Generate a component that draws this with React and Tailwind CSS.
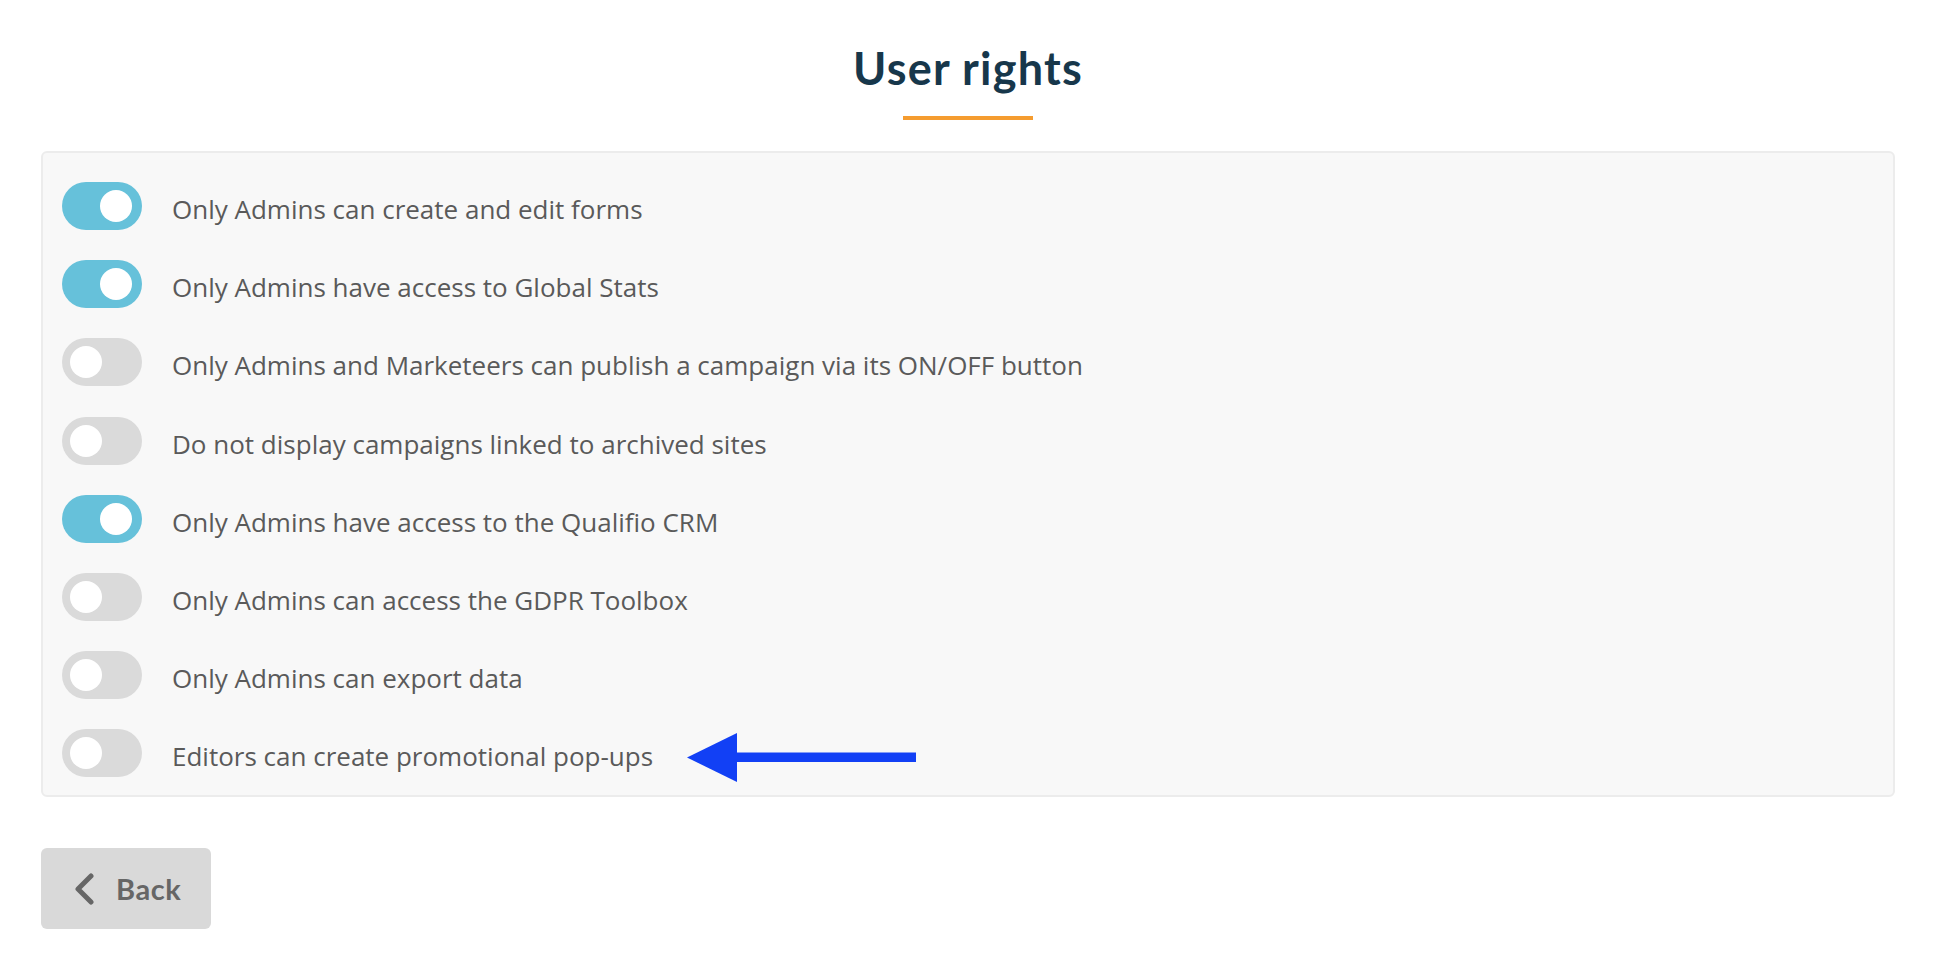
import { useState } from 'react'

const rights = [
  { key: 'forms', label: 'Only Admins can create and edit forms', on: true },
  { key: 'stats', label: 'Only Admins have access to Global Stats', on: true },
  { key: 'publish', label: 'Only Admins and Marketeers can publish a campaign via its ON/OFF button', on: false },
  { key: 'archived', label: 'Do not display campaigns linked to archived sites', on: false },
  { key: 'crm', label: 'Only Admins have access to the Qualifio CRM', on: true },
  { key: 'gdpr', label: 'Only Admins can access the GDPR Toolbox', on: false },
  { key: 'export', label: 'Only Admins can export data', on: false },
  { key: 'popups', label: 'Editors can create promotional pop-ups', on: false },
]

function Toggle({ checked, onChange }) {
  return (
    <button
      onClick={() => onChange(!checked)}
      className={`relative flex h-[48px] w-[80px] shrink-0 items-center rounded-full transition-colors ${
        checked ? 'bg-[#66c1da]' : 'bg-[#dadada]'
      }`}
    >
      <span
        className={`inline-block h-[32px] w-[32px] rounded-full bg-white transition-transform ${
          checked ? 'translate-x-[38px]' : 'translate-x-[8px]'
        }`}
      />
    </button>
  )
}

// the blue annotation arrow pointing at the last row
function Arrow() {
  return (
    <svg
      className="absolute left-[687px] top-[733px]"
      width="230"
      height="50"
      viewBox="0 0 230 50"
    >
      <polygon points="0,24.5 50,0 50,49" fill="#1240f5" />
      <rect x="48" y="19.5" width="181" height="9.5" fill="#1240f5" />
    </svg>
  )
}

export default function App() {
  const [settings, setSettings] = useState(() =>
    rights.reduce((acc, r) => {
      acc[r.key] = r.on
      return acc
    }, {})
  )

  return (
    <div className="relative min-h-[966px] bg-white pl-[41px] pr-[43px]" style={{ fontFamily: '"Open Sans", sans-serif' }}>
      {/* Title */}
      <div className="flex flex-col items-center pt-[46px]">
        <h1 className="text-[45px] leading-[44px] font-bold tracking-[1.2px] text-[#17374b]" style={{ fontFamily: 'Lato, sans-serif' }}>
          User rights
        </h1>
        <div className="mt-[26px] h-[4px] w-[130px] bg-[#f59c2f]" />
      </div>

      {/* Rights list */}
      <div className="mt-[31px] flex flex-col gap-[30.2px] rounded-[6px] border-2 border-[#ececec] bg-[#f8f8f8] pl-[19px] pr-4 pt-[29px] pb-[18px]">
        {rights.map(r => (
          <div key={r.key} className="flex h-[48px] items-center gap-[30px]">
            <Toggle
              checked={settings[r.key]}
              onChange={v => setSettings(prev => ({ ...prev, [r.key]: v }))}
            />
            <span className="pt-[7px] text-[26px] text-[#5a5a5a]">{r.label}</span>
          </div>
        ))}
      </div>

      {/* Back */}
      <button
        className="mt-[51px] flex h-[81px] w-[170px] items-center gap-[22px] rounded-[6px] bg-[#d9d9d9] pl-[33px] text-[29px] font-bold tracking-[0.6px] text-[#666666]"
        style={{ fontFamily: 'Lato, sans-serif' }}
      >
        <svg width="20" height="32" viewBox="0 0 20 32" fill="none">
          <path d="M17 3 L4 16 L17 29" stroke="#666666" strokeWidth="5" strokeLinecap="round" strokeLinejoin="round" />
        </svg>
        Back
      </button>

      <Arrow />
    </div>
  )
}
